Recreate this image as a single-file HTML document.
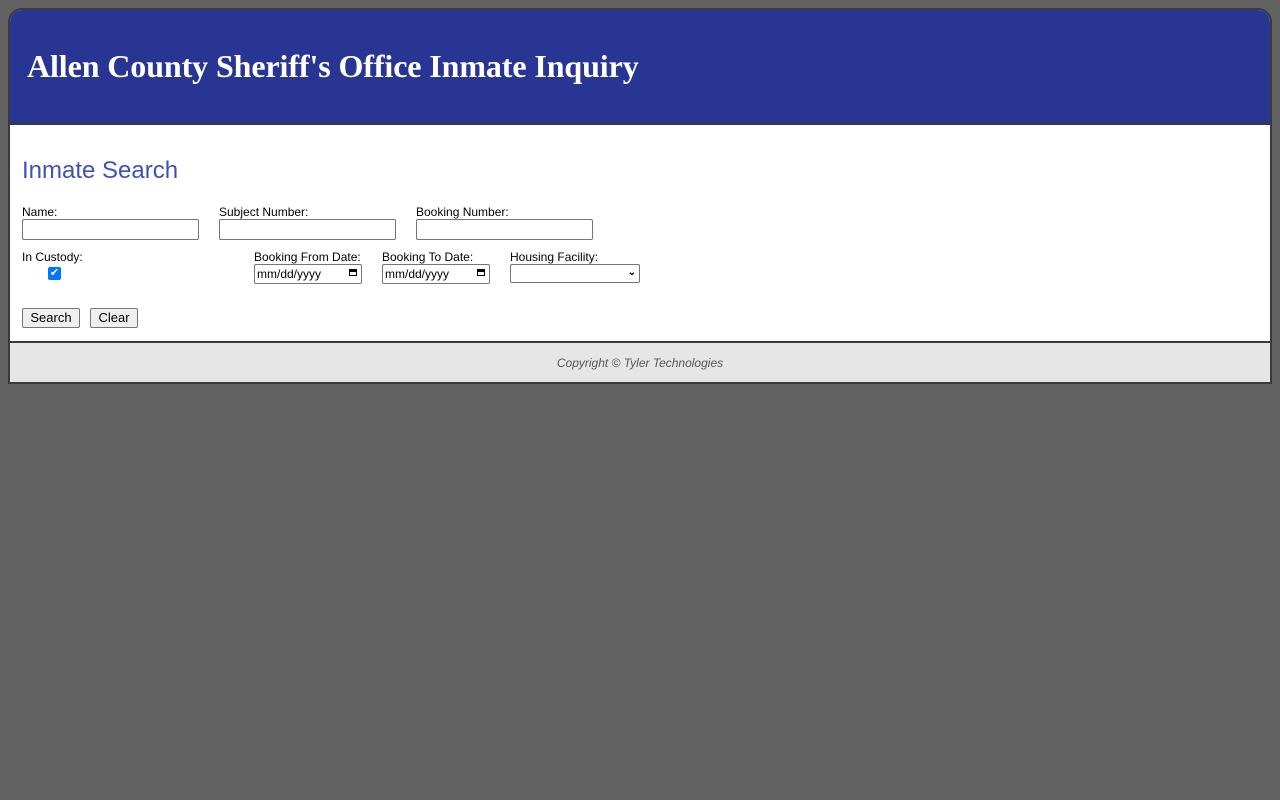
<!DOCTYPE html>
<html><head><style>
body{margin:0;background:#626262;width:1280px;height:800px;position:relative;font-family:"Liberation Sans",Arial,sans-serif;}
.box{position:absolute;left:8px;top:8px;width:1260px;height:372px;border:2px solid #3a3a3a;border-radius:14px 14px 0 0;background:#fff;overflow:hidden}
.hdr{position:absolute;left:0;top:0;width:1260px;height:113px;background:#283593;border-bottom:2px solid #3a3a3a}
.hdr h1{position:absolute;left:17px;top:38px;margin:0;font-family:"Liberation Serif",serif;font-weight:bold;font-size:32px;color:#fff;line-height:36px;letter-spacing:-0.1px}
.ftr{position:absolute;left:0;top:331px;width:1260px;height:41px;background:#e6e6e6;border-top:2px solid #3a3a3a;text-align:center;font-style:italic;font-size:12px;color:#555;line-height:41px}
.a{position:absolute;font-size:12px;color:#000;line-height:14px}
.in{position:absolute;height:19px;border:1px solid #767676;border-radius:2px;box-sizing:border-box;background:#fff}
.d{position:absolute;height:20px;border:1px solid #767676;border-radius:2px;box-sizing:border-box;background:#fff;font-size:12px;line-height:18px;padding-left:2px}
.btn{position:absolute;height:20px;border:1px solid #767676;border-radius:2px;background:#efefef;box-sizing:border-box;font-size:13px;line-height:18px;text-align:center}
</style></head><body>
<div class="box">
<div class="hdr"><h1>Allen County Sheriff's Office Inmate Inquiry</h1></div>
<div style="position:absolute;left:12px;top:147px;font-size:24px;color:#3f51b5;line-height:28px">Inmate Search</div>
<div class="a" style="left:12px;top:195px">Name:</div>
<div class="a" style="left:209px;top:195px">Subject Number:</div>
<div class="a" style="left:406px;top:195px">Booking Number:</div>
<div class="in" style="left:12px;top:209px;width:177px;height:21px"></div>
<div class="in" style="left:209px;top:209px;width:177px;height:21px"></div>
<div class="in" style="left:406px;top:209px;width:177px;height:21px"></div>
<div class="a" style="left:12px;top:240px">In Custody:</div>
<div style="position:absolute;left:38px;top:257px;width:13px;height:13px;background:#0075ff;border-radius:2px;color:#fff;font-size:11px;line-height:13px;text-align:center">✔</div>
<div class="a" style="left:244px;top:240px">Booking From Date:</div>
<div class="a" style="left:372px;top:240px">Booking To Date:</div>
<div class="a" style="left:500px;top:240px">Housing Facility:</div>
<div class="d" style="left:244px;top:254px;width:108px">mm/dd/yyyy<span style="position:absolute;right:4px;top:4px;width:8px;height:7px;border:1.5px solid #000;border-top-width:3px;box-sizing:border-box"></span></div>
<div class="d" style="left:372px;top:254px;width:108px">mm/dd/yyyy<span style="position:absolute;right:4px;top:4px;width:8px;height:7px;border:1.5px solid #000;border-top-width:3px;box-sizing:border-box"></span></div>
<div class="d" style="left:500px;top:254px;width:130px;height:19px"><span style="position:absolute;right:3px;top:-1px;font-size:10px;font-weight:bold">&#8964;</span></div>
<div class="btn" style="left:12px;top:298px;width:58px">Search</div>
<div class="btn" style="left:80px;top:298px;width:48px">Clear</div>
<div class="ftr">Copyright © Tyler Technologies</div>
</div>
</body></html>
